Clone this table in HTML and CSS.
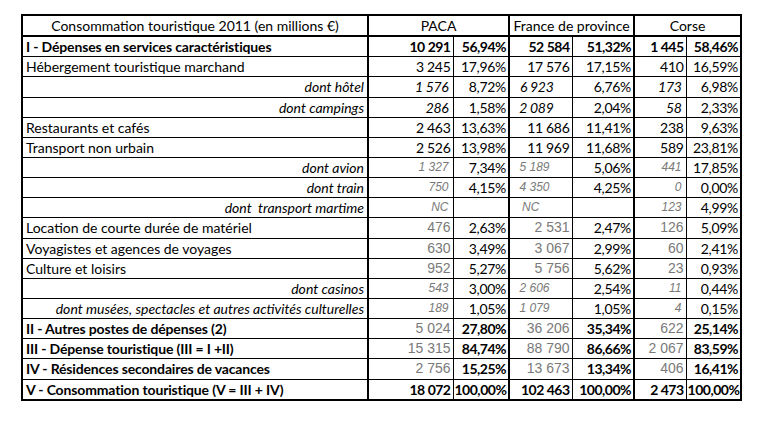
FILE: index.html
```html
<!DOCTYPE html>
<html lang="fr">
<head>
<meta charset="utf-8">
<title>Consommation touristique 2011</title>
<link rel="stylesheet" href="styles.css">
</head>
<body>
<table class="t">
<colgroup>
<col class="c-lbl"><col class="c-n1"><col class="c-p1"><col class="c-n2"><col class="c-p2"><col class="c-n3"><col class="c-p3">
</colgroup>
<tr class="head">
<td class="lbl ctr">Consommation touristique 2011 (en millions €)</td>
<td colspan="2" class="grp ctr">PACA</td>
<td colspan="2" class="grp ctr">France de province</td>
<td colspan="2" class="grp ctr">Corse</td>
</tr>
<tr class="b">
<td class="lbl">I - Dépenses en services caractéristiques</td>
<td class="n grp">10 291</td><td class="n">56,94%</td>
<td class="n grp">52 584</td><td class="n">51,32%</td>
<td class="n grp">1 445</td><td class="n">58,46%</td>
</tr>
<tr>
<td class="lbl">Hébergement touristique marchand</td>
<td class="n grp">3 245</td><td class="n">17,96%</td>
<td class="n grp">17 576</td><td class="n">17,15%</td>
<td class="n grp">410</td><td class="n">16,59%</td>
</tr>
<tr>
<td class="lbl ind">dont hôtel</td>
<td class="n grp i">1 576</td><td class="n">8,72%</td>
<td class="n grp i mid">6 923</td><td class="n">6,76%</td>
<td class="n grp i">173</td><td class="n">6,98%</td>
</tr>
<tr>
<td class="lbl ind">dont campings</td>
<td class="n grp i">286</td><td class="n">1,58%</td>
<td class="n grp i mid">2 089</td><td class="n">2,04%</td>
<td class="n grp i">58</td><td class="n">2,33%</td>
</tr>
<tr>
<td class="lbl">Restaurants et cafés</td>
<td class="n grp">2 463</td><td class="n">13,63%</td>
<td class="n grp">11 686</td><td class="n">11,41%</td>
<td class="n grp">238</td><td class="n">9,63%</td>
</tr>
<tr>
<td class="lbl">Transport non urbain</td>
<td class="n grp">2 526</td><td class="n">13,98%</td>
<td class="n grp">11 969</td><td class="n">11,68%</td>
<td class="n grp">589</td><td class="n">23,81%</td>
</tr>
<tr>
<td class="lbl ind">dont avion</td>
<td class="n grp g i">1 327</td><td class="n">7,34%</td>
<td class="n grp g i mid">5 189</td><td class="n">5,06%</td>
<td class="n grp g i">441</td><td class="n">17,85%</td>
</tr>
<tr>
<td class="lbl ind">dont train</td>
<td class="n grp g i">750</td><td class="n">4,15%</td>
<td class="n grp g i mid">4 350</td><td class="n">4,25%</td>
<td class="n grp g i">0</td><td class="n">0,00%</td>
</tr>
<tr>
<td class="lbl ind">dont&nbsp; transport martime</td>
<td class="n grp g i">NC</td><td class="n"></td>
<td class="n grp g i left">NC</td><td class="n"></td>
<td class="n grp g i">123</td><td class="n">4,99%</td>
</tr>
<tr>
<td class="lbl">Location de courte durée de matériel</td>
<td class="n grp g">476</td><td class="n">2,63%</td>
<td class="n grp g">2 531</td><td class="n">2,47%</td>
<td class="n grp g">126</td><td class="n">5,09%</td>
</tr>
<tr>
<td class="lbl">Voyagistes et agences de voyages</td>
<td class="n grp g">630</td><td class="n">3,49%</td>
<td class="n grp g">3 067</td><td class="n">2,99%</td>
<td class="n grp g">60</td><td class="n">2,41%</td>
</tr>
<tr>
<td class="lbl">Culture et loisirs</td>
<td class="n grp g">952</td><td class="n">5,27%</td>
<td class="n grp g">5 756</td><td class="n">5,62%</td>
<td class="n grp g">23</td><td class="n">0,93%</td>
</tr>
<tr>
<td class="lbl ind">dont casinos</td>
<td class="n grp g i">543</td><td class="n">3,00%</td>
<td class="n grp g i mid">2 606</td><td class="n">2,54%</td>
<td class="n grp g i">11</td><td class="n">0,44%</td>
</tr>
<tr>
<td class="lbl ind">dont musées, spectacles et autres activités culturelles</td>
<td class="n grp g i">189</td><td class="n">1,05%</td>
<td class="n grp g i mid">1 079</td><td class="n">1,05%</td>
<td class="n grp g i">4</td><td class="n">0,15%</td>
</tr>
<tr class="b">
<td class="lbl">II - Autres postes de dépenses (2)</td>
<td class="n grp g">5 024</td><td class="n">27,80%</td>
<td class="n grp g">36 206</td><td class="n">35,34%</td>
<td class="n grp g">622</td><td class="n">25,14%</td>
</tr>
<tr class="b">
<td class="lbl">III - Dépense touristique (III = I +II)</td>
<td class="n grp g">15 315</td><td class="n">84,74%</td>
<td class="n grp g">88 790</td><td class="n">86,66%</td>
<td class="n grp g">2 067</td><td class="n">83,59%</td>
</tr>
<tr class="b">
<td class="lbl">IV - Résidences secondaires de vacances</td>
<td class="n grp g">2 756</td><td class="n">15,25%</td>
<td class="n grp g">13 673</td><td class="n">13,34%</td>
<td class="n grp g">406</td><td class="n">16,41%</td>
</tr>
<tr class="b">
<td class="lbl">V - Consommation touristique (V = III + IV)</td>
<td class="n grp">18 072</td><td class="n">100,00%</td>
<td class="n grp">102 463</td><td class="n">100,00%</td>
<td class="n grp">2 473</td><td class="n">100,00%</td>
</tr>
</table>
</body>
</html>
```
FILE: styles.css
```css
html, body {
  margin: 0;
  padding: 0;
  background: #ffffff;
}

body {
  padding: 14px 0 0 21px;
  font-family: "Lato", "Open Sans", sans-serif;
  font-size: 14px;
  color: #000;
}

.t {
  border-collapse: collapse;
  table-layout: fixed;
  width: 720px;
  border: 2px solid #000;
}

.c-lbl { width: 346px; }
.c-n1 { width: 85px; }
.c-p1 { width: 56px; }
.c-n2 { width: 63px; }
.c-p2 { width: 62px; }
.c-n3 { width: 52px; }
.c-p3 { width: 55px; }

.t td {
  border: 1px solid #000;
  height: 19.15px;
  padding: 0 3px;
  line-height: 19px;
  white-space: nowrap;
  overflow: hidden;
}

.t .head td {
  border-bottom: 2px solid #000;
}

.t td.grp {
  border-left: 2px solid #000;
}

.lbl { text-align: left; }
.ind { text-align: right; font-style: italic; }
.ctr { text-align: center; }
.t td.n {
  text-align: right;
  padding: 0 2px 0 1px;
  letter-spacing: -0.3px;
}
.t td.left { text-align: left; padding-left: 12px; }
.t td.n.i { padding-right: 4px; }
.t td.n.mid { padding-right: 18px; }
.t td.g.mid { padding-right: 22px; }

.b td { font-weight: 700; letter-spacing: -0.15px; }
.t .b td.n { letter-spacing: -0.5px; }
.t .b td.g { font-weight: 400; letter-spacing: 0; }

.i { font-style: italic; }

.g {
  font-family: "Liberation Sans", Arial, sans-serif;
  color: #7a7a7a;
  font-size: 14px;
}

.t td.g { letter-spacing: 0; }
.g.i { font-size: 12px; }
```
